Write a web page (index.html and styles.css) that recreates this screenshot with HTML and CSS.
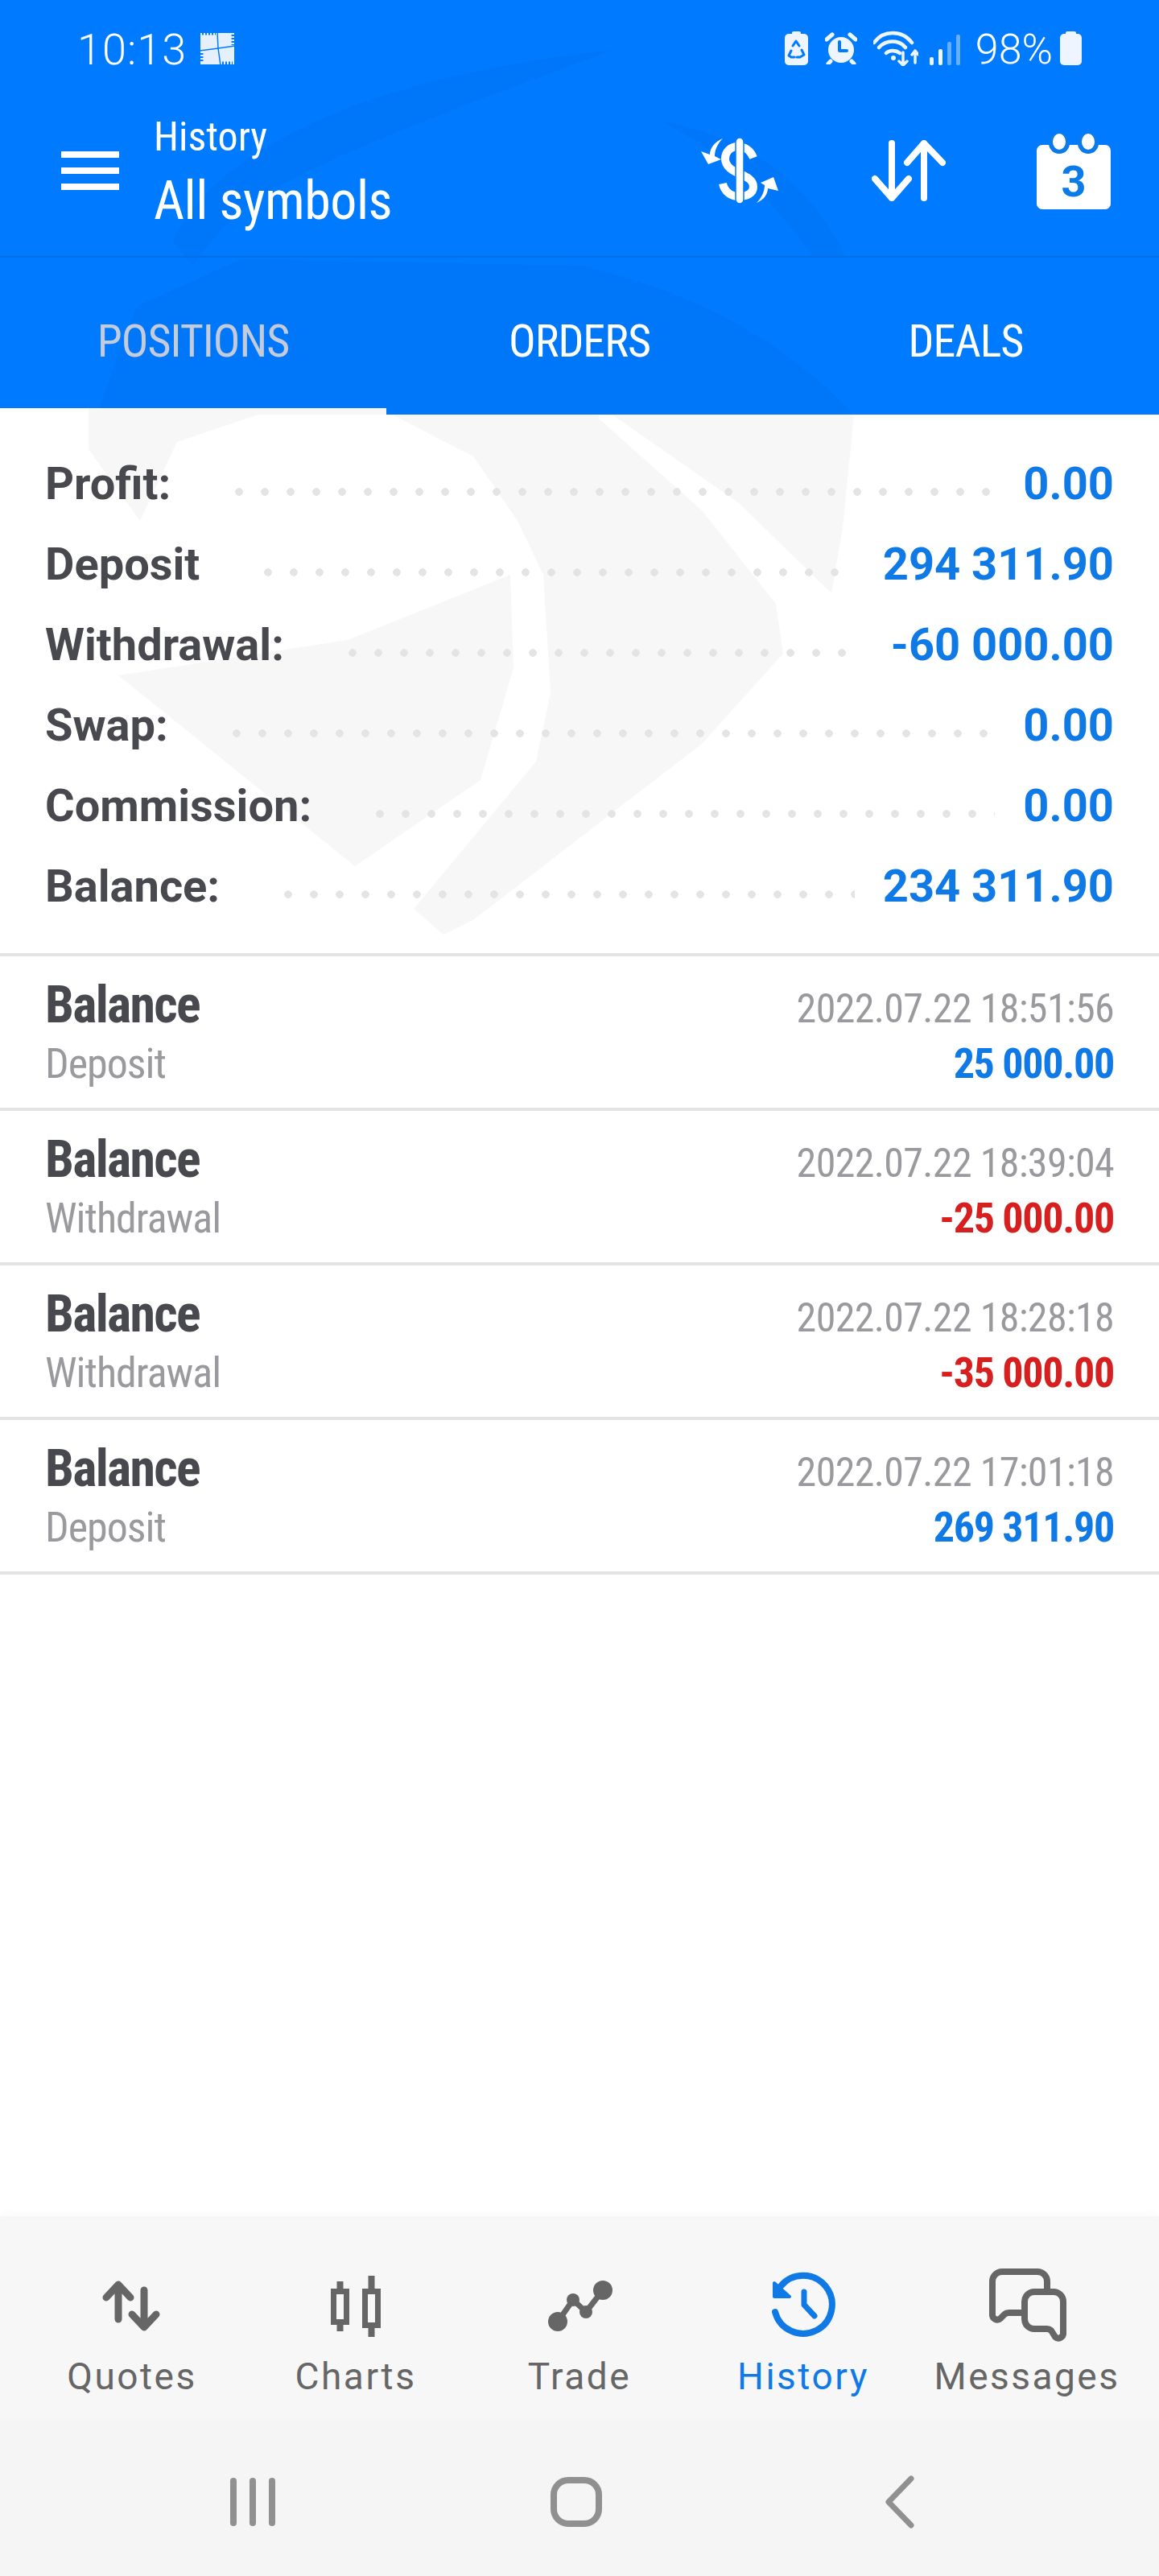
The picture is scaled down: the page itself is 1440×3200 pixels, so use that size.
FILE: index.html
```html
<!DOCTYPE html>
<html lang="en">
<head>
    <meta charset="UTF-8">
    <meta name="viewport" content="width=device-width, initial-scale=1.0">
    <title>History - All symbols</title>
    <link rel="stylesheet" href="styles.css">
</head>
<body>
<div class="phone">
    <header class="top">
        <svg class="swoosh" viewBox="0 0 1440 515">
            <path d="M215 300C260 200 420 100 760 62C640 110 480 160 330 240C290 265 260 300 240 330Z"/>
            <path d="M820 150C930 170 1010 230 1050 318L1010 318C970 260 900 190 820 150Z"/>
            <path d="M170 380L120 515L1060 515C1000 450 900 370 720 330L300 322Z"/>
        </svg>
        <div class="status">
            <span class="clock">10:13</span>
            <!-- notification tile -->
            <svg class="tile" width="44" height="44" viewBox="0 0 44 44">
                <path class="tile-fill" d="M1 3H43V42H1Z"/>
                <path class="tile-cut" d="M22 2L23 22L26 43M0 25L23 22L44 19"/>
                <path class="tile-fringe" d="M3 2H20M43 5V18M1 28V40M28 42H41"/>
            </svg>
            <div class="status-right">
                <svg width="29" height="42" viewBox="0 0 29 42">
                    <rect class="w" x="9" y="0" width="11" height="6" rx="2"/>
                    <rect class="w" x="0" y="3" width="29" height="39" rx="5"/>
                    <path class="recycle" d="M10 18L14 12L18 18M21 23L24 29L19 32H15M8 24L5 30L8 32H12"/>
                </svg>
                <svg width="40" height="40" viewBox="0 0 40 40">
                    <circle class="w" cx="20" cy="22" r="16"/>
                    <path class="w-line" d="M2 9L9 3M38 9L31 3M7 36L4 39M33 36L36 39"/>
                    <path class="clock-hand" d="M18 12V23H27"/>
                </svg>
                <svg width="56" height="44" viewBox="0 0 56 44">
                    <path class="wifi" d="M1 15C12 -1 36 -1 48 15M7 21C16 11 32 11 40 21M16 28C20 24 28 24 33 28"/>
                    <circle class="w" cx="25" cy="34" r="3"/>
                    <path class="w-thin" d="M37 27V43M32 38L37 43L42 38M52 40V25M48 30L52 25L56 30"/>
                </svg>
                <div class="signal">
                    <i class="s1"></i><i class="s2"></i><i class="s3"></i><i class="s4"></i>
                </div>
                <span class="percent">98%</span>
                <svg width="27" height="42" viewBox="0 0 27 42">
                    <rect class="w" x="7" y="0" width="13" height="6" rx="2"/>
                    <rect class="w" x="0" y="3" width="27" height="39" rx="5"/>
                </svg>
            </div>
        </div>
        <div class="toolbar">
            <div class="burger"><i></i><i></i><i></i></div>
            <div class="titles">
                <div class="title-small">History</div>
                <div class="title-big">All symbols</div>
            </div>
            <div class="actions">
                <svg class="act-money" width="98" height="84" viewBox="0 0 98 84">
                    <path class="dollar" d="M66 26C62 16 54 12 47 12C37 12 31 19 31 27C31 37 40 42 49 46C59 50 66 54 66 62C66 70 58 74 48 74C38 74 30 68 28 58"/>
                    <rect class="dollar-bar" x="44" y="1" width="10" height="82" rx="5"/>
                    <path class="wh" d="M28 2C18 6 12 14 12 22L1 18L10 34L26 28L18 24C18 16 22 8 28 2Z"/>
                    <path class="wh" d="M70 82C80 78 84 70 84 64L97 67L91 50L75 57L80 60C80 68 76 76 70 82Z"/>
                </svg>
                <svg width="92" height="76" viewBox="0 0 92 76">
                    <path class="w-thick" d="M25 4V72M4 48L25 72L46 48M65 72V4M44 28L65 4L88 28"/>
                </svg>
                <svg width="92" height="96" viewBox="0 0 92 96">
                    <rect class="wh" x="0" y="16" width="92" height="80" rx="7"/>
                    <circle class="cal-notch" cx="28" cy="14" r="13"/>
                    <circle class="cal-notch" cx="64" cy="14" r="13"/>
                    <ellipse class="wh" cx="28" cy="12" rx="8" ry="10"/>
                    <ellipse class="wh" cx="64" cy="12" rx="8" ry="10"/>
                    <text class="cal-day" x="46" y="80" text-anchor="middle">3</text>
                </svg>
            </div>
        </div>
        <nav class="tabs">
            <div class="tab tab-active">POSITIONS</div>
            <div class="tab">ORDERS</div>
            <div class="tab">DEALS</div>
        </nav>
    </header>

    <section class="summary">
        <svg class="mark" width="1440" height="680" viewBox="0 507 1440 680">
            <path d="M110 507H480V515H321L220 549L174 647L110 558Z"/>
            <path d="M487 515L588 567L643 647L675 714L684 860L666 946L514 1129L551 1161L588 1143L872 924L973 812L964 750L872 634L744 520V515Z"/>
            <path d="M762 516H1061L1047 656L1033 737L918 625Z"/>
            <path d="M147 839L432 795L634 714L638 830L597 969L441 1076Z"/>
        </svg>
        <div class="sum-row"><span class="sum-label">Profit:</span><span class="dots"></span><span class="sum-value">0.00</span></div>
        <div class="sum-row"><span class="sum-label">Deposit</span><span class="dots"></span><span class="sum-value">294 311.90</span></div>
        <div class="sum-row"><span class="sum-label">Withdrawal:</span><span class="dots"></span><span class="sum-value">-60 000.00</span></div>
        <div class="sum-row"><span class="sum-label">Swap:</span><span class="dots"></span><span class="sum-value">0.00</span></div>
        <div class="sum-row"><span class="sum-label">Commission:</span><span class="dots"></span><span class="sum-value">0.00</span></div>
        <div class="sum-row"><span class="sum-label">Balance:</span><span class="dots"></span><span class="sum-value">234 311.90</span></div>
    </section>

    <div class="deals">
        <div class="deal">
            <div class="deal-name">Balance</div>
            <div class="deal-date">2022.07.22 18:51:56</div>
            <div class="deal-type">Deposit</div>
            <div class="deal-amount">25 000.00</div>
        </div>
        <div class="deal">
            <div class="deal-name">Balance</div>
            <div class="deal-date">2022.07.22 18:39:04</div>
            <div class="deal-type">Withdrawal</div>
            <div class="deal-amount neg">-25 000.00</div>
        </div>
        <div class="deal">
            <div class="deal-name">Balance</div>
            <div class="deal-date">2022.07.22 18:28:18</div>
            <div class="deal-type">Withdrawal</div>
            <div class="deal-amount neg">-35 000.00</div>
        </div>
        <div class="deal">
            <div class="deal-name">Balance</div>
            <div class="deal-date">2022.07.22 17:01:18</div>
            <div class="deal-type">Deposit</div>
            <div class="deal-amount">269 311.90</div>
        </div>
    </div>

    <nav class="bottom-nav">
        <div class="nav-item">
            <svg class="nav-icon" viewBox="0 0 100 90">
                <path class="g-thick" d="M33 19V61M18 34L33 18L48 34M65 25V69M50 55L65 71L80 55"/>
            </svg>
            <span>Quotes</span>
        </div>
        <div class="nav-item">
            <svg class="nav-icon" viewBox="0 0 100 90">
                <rect class="g-box" x="22.5" y="26.5" width="16" height="38"/>
                <rect class="g-box" x="61.5" y="26.5" width="16" height="42"/>
                <path class="g-wick" d="M30.500 14V23M30.500 68V76M69.500 7V23M69.500 72V83"/>
            </svg>
            <span>Charts</span>
        </div>
        <div class="nav-item">
            <svg class="nav-icon" viewBox="0 0 100 90">
                <path class="g-trade" d="M23 64L42 37L58 52L79 25"/>
                <circle class="g" cx="23" cy="64" r="12"/>
                <circle class="g" cx="42" cy="37" r="8"/>
                <circle class="g" cx="58" cy="52" r="8"/>
                <circle class="g" cx="79" cy="25" r="12"/>
            </svg>
            <span>Trade</span>
        </div>
        <div class="nav-item nav-active">
            <svg class="nav-icon" viewBox="0 0 100 90">
                <path class="h-line" d="M15 52A36 36 0 1 0 22 20"/>
                <path class="h-head" d="M14 16V33H33Z"/>
                <path class="h-hand" d="M51 27V43L64 57"/>
            </svg>
            <span>History</span>
        </div>
        <div class="nav-item">
            <svg class="nav-icon" viewBox="0 0 100 90">
                <path class="g-msg" d="M75 25V14A12 12 0 0 0 63 2H19A12 12 0 0 0 7 14V55A6 6 0 0 0 17 60L22 55A8 8 0 0 1 28 53H45"/>
                <path class="g-msg" d="M59 27H83A12 12 0 0 1 95 39V78A6 6 0 0 1 85 83L80 75A8 8 0 0 0 74 73H59A12 12 0 0 1 47 61V39A12 12 0 0 1 59 27Z"/>
            </svg>
            <span>Messages</span>
        </div>
    </nav>

    <div class="system-nav">
        <div class="sys-recents"><i></i><i></i><i></i></div>
        <div class="sys-home"></div>
        <svg width="40" height="66" viewBox="0 0 40 66">
            <path class="sys-back" d="M34 4L6 33L34 62"/>
        </svg>
    </div>
</div>
</body>
</html>
```
FILE: styles.css
```css
body {
    margin: 0;
    background: #fff;
    font-family: Roboto, "Liberation Sans", sans-serif;
}
.phone {
    width: 1440px;
    height: 3200px;
    display: flex;
    flex-direction: column;
    overflow: hidden;
    background: #fff;
}

/* blue header */
.top {
    position: relative;
    background: #007bff;
    color: #fff;
}
.swoosh {
    position: absolute;
    top: 0;
    left: 0;
    width: 1440px;
    height: 515px;
    fill: #0077f9;
}
.status, .toolbar, .tabs {
    position: relative;
}
.status {
    height: 120px;
    display: flex;
    align-items: center;
    padding: 0 96px 0 96px;
    font-weight: 300;
    font-size: 52px;
}
.clock {
    padding-top: 2px;
    font-size: 54px;
    letter-spacing: 1px;
}
.tile {
    margin-left: 16px;
}
.tile-fill {
    fill: #e6f0fc;
}
.tile-cut {
    fill: none;
    stroke: #007bff;
    stroke-width: 1.500;
}
.tile-fringe {
    fill: none;
    stroke: #007bff;
    stroke-width: 7;
    stroke-dasharray: 2 2;
}
.status-right {
    margin-left: auto;
    display: flex;
    align-items: center;
}
.status-right svg:nth-child(1) {
    margin-right: 21px;
}
.status-right svg:nth-child(2) {
    margin-right: 20px;
}
.status-right svg:nth-child(3) {
    margin-right: 14px;
}
.w {
    fill: #eef5fe;
}
.wh {
    fill: #fff;
}
.w-line, .w-thin, .wifi, .recycle, .clock-hand {
    fill: none;
    stroke-linecap: round;
    stroke-linejoin: round;
}
.w-line {
    stroke: #eef5fe;
    stroke-width: 5;
}
.w-thin {
    stroke: #eef5fe;
    stroke-width: 3.500;
}
.wifi {
    stroke: #eef5fe;
    stroke-width: 4.500;
}
.recycle {
    stroke: #007bff;
    stroke-width: 3;
}
.clock-hand {
    stroke: #007bff;
    stroke-width: 4;
}
.signal {
    display: flex;
    align-items: flex-end;
    gap: 6px;
    height: 42px;
    margin-right: 19px;
}
.signal i {
    width: 5px;
    border-radius: 2px;
    background: #eef5fe;
}
.s1 { height: 10px; }
.s2 { height: 20px; }
.s3 { height: 29px; background: rgba(255, 255, 255, 0.4) !important; }
.s4 { height: 38px; background: rgba(255, 255, 255, 0.4) !important; }
.percent {
    margin-right: 9px;
    padding-top: 2px;
}

.toolbar {
    height: 184px;
    padding: 0 60px 14px 76px;
    display: flex;
    align-items: center;
    border-bottom: 2px solid #0070e8;
}
.burger {
    width: 72px;
    display: flex;
    flex-direction: column;
    gap: 12px;
}
.burger i {
    height: 8px;
    background: #fff;
}
.titles {
    margin-left: 43px;
    font-stretch: condensed;
}
.title-small {
    font-size: 50px;
    line-height: 72px;
}
.title-big {
    font-size: 66px;
    line-height: 80px;
    margin-top: 4px;
    letter-spacing: -0.500px;
}
.actions {
    margin-left: auto;
    display: flex;
    align-items: center;
    gap: 113px;
}
.act-money {
    margin-right: 2px;
}
.dollar {
    fill: none;
    stroke: #fff;
    stroke-width: 10;
}
.dollar-bar {
    fill: #fff;
    stroke: #007bff;
    stroke-width: 1.500;
}
.w-thick {
    fill: none;
    stroke: #fff;
    stroke-width: 8;
    stroke-linecap: round;
    stroke-linejoin: round;
}
.cal-notch {
    fill: #0a7be8;
}
.cal-day {
    font-size: 54px;
    font-weight: 700;
    fill: #0a7be8;
}

.tabs {
    display: grid;
    grid-template-columns: repeat(3, 480px);
    font-stretch: condensed;
    font-size: 56px;
    letter-spacing: -1px;
}
.tab {
    height: 195px;
    box-sizing: border-box;
    display: flex;
    align-items: center;
    justify-content: center;
    padding-top: 12px;
}
.tab-active {
    color: #c3cbdd;
    border-bottom: 8px solid #fff;
    padding-top: 20px;
}

/* totals */
.summary {
    position: relative;
    padding: 36px 56px 33px 56px;
    border-bottom: 4px solid #e4e4e4;
}
.mark {
    position: absolute;
    top: -8px;
    left: 0;
    fill: #f7f7f7;
}
.sum-row {
    position: relative;
    height: 100px;
    display: flex;
    align-items: baseline;
    font-size: 56px;
    line-height: 100px;
    font-weight: 700;
    color: #48484f;
}
.dots {
    flex: 1;
    align-self: flex-start;
    height: 10px;
    margin: 55px 35px 0 80px;
    background: radial-gradient(circle at 5px 5px, #e4e4e4 4.500px, transparent 5px) 0 0 / 32px 10px repeat-x;
}
.sum-value {
    color: #0f7ae5;
}

/* deals list */
.deals {
    flex: 1;
}
.deal {
    height: 192px;
    box-sizing: border-box;
    padding: 26px 56px 0 56px;
    border-bottom: 4px solid #e4e4e4;
    display: grid;
    grid-template-columns: 1fr auto;
    grid-template-rows: 70px 76px;
    align-items: baseline;
    font-stretch: condensed;
}
.deal-name {
    font-size: 64px;
    line-height: 70px;
    font-weight: 700;
    letter-spacing: -1.700px;
    color: #48484f;
}
.deal-date {
    font-size: 50px;
    line-height: 70px;
    letter-spacing: -0.650px;
    color: #9a9a9e;
    text-align: right;
}
.deal-type {
    font-size: 52px;
    line-height: 76px;
    letter-spacing: -1px;
    color: #9a9a9e;
}
.deal-amount {
    font-size: 52px;
    line-height: 76px;
    font-weight: 700;
    letter-spacing: -1.300px;
    color: #0f7ae5;
    text-align: right;
}
.neg {
    color: #d61f1f;
}

/* bottom tabs */
.bottom-nav {
    height: 254px;
    box-sizing: border-box;
    padding: 67px 25px 0;
    display: grid;
    grid-template-columns: repeat(5, 278px);
    background: #f7f7f7;
    box-shadow: 0 -4px 10px rgba(0, 0, 0, 0.02);
}
.nav-item {
    display: flex;
    flex-direction: column;
    align-items: center;
    font-size: 46px;
    line-height: 60px;
    letter-spacing: 2.500px;
    color: #666;
}
.nav-icon {
    width: 100px;
    height: 90px;
    margin-bottom: 12px;
    overflow: visible;
}
.nav-active {
    color: #0f7ae5;
}
.g {
    fill: #666;
}
.g-thick, .g-trade, .g-msg {
    fill: none;
    stroke: #666;
    stroke-linecap: round;
    stroke-linejoin: round;
}
.g-thick {
    stroke-width: 9;
}
.g-trade {
    stroke-width: 7;
}
.g-msg {
    stroke-width: 8;
}
.g-box {
    fill: none;
    stroke: #666;
    stroke-width: 7;
}
.g-wick {
    fill: none;
    stroke: #666;
    stroke-width: 8;
}
.h-line, .h-hand {
    fill: none;
    stroke: #0f7ae5;
    stroke-linecap: round;
    stroke-linejoin: round;
}
.h-line {
    stroke-width: 8;
}
.h-hand {
    stroke-width: 7;
}
.h-head {
    fill: #0f7ae5;
    stroke: #0f7ae5;
    stroke-width: 4;
    stroke-linejoin: round;
}

/* android buttons */
.system-nav {
    height: 193px;
    box-sizing: border-box;
    padding: 9px 0 0 113px;
    display: grid;
    grid-template-columns: repeat(3, 402px);
    align-items: center;
    justify-items: center;
    background: #f5f5f5;
}
.sys-recents {
    display: flex;
    gap: 16px;
}
.sys-recents i {
    width: 8px;
    height: 60px;
    border-radius: 4px;
    background: #909090;
}
.sys-home {
    width: 64px;
    height: 62px;
    box-sizing: border-box;
    border: 8px solid #909090;
    border-radius: 22px;
}
.sys-back {
    fill: none;
    stroke: #909090;
    stroke-width: 7;
    stroke-linecap: round;
    stroke-linejoin: round;
}
```
